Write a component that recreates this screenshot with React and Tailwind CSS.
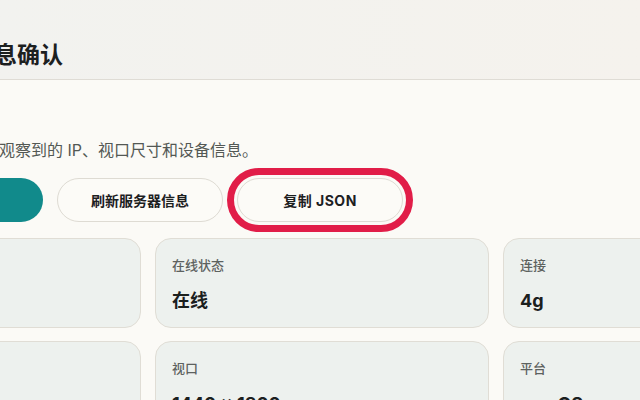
import React from "react";

const font = { fontFamily: '"Inter", "Noto Sans CJK SC", sans-serif' };

function Card({ label, value }) {
  return (
    <div className="h-[90px] rounded-2xl border border-[#e0ddd5] bg-[#edf1ee] px-4 pt-4">
      <div className="text-[13px] leading-5 font-medium text-[#5d625f]">{label}</div>
      <div className="mt-[14px] text-[18px] leading-6 font-bold text-[#1b201e]">{value}</div>
    </div>
  );
}

export default function App() {
  return (
    <div className="min-h-[400px] w-[640px] overflow-hidden bg-[#fbfaf6]" style={font}>
      <header className="border-b border-[#dfdcd5] bg-gradient-to-r from-[#f2f2ef] to-[#f5f2ed]">
        <div className="ml-[-193px] w-[1030px] pt-[40px] pb-[9px] pl-[3px]">
          <h1 className="text-[23px] leading-[30px] font-bold text-[#1c201f]">浏览器与服务器信息确认</h1>
        </div>
      </header>
      <main className="ml-[-193px] w-[1030px] pt-[58px]">
        <p className="text-[16px] leading-6 text-[#535854]">汇总当前浏览器与服务器所观察到的 IP、视口尺寸和设备信息。</p>
        <div className="mt-4 flex gap-[14px]">
          <button className="h-[44px] w-[236px] rounded-full bg-[#118a8b] text-[14px] font-bold text-white">重新检测</button>
          <button className="h-[44px] w-[166px] rounded-full border border-[#dedbd3] bg-[#fcfbf7] text-[14px] font-bold text-[#1c201f]">刷新服务器信息</button>
          <button className="h-[44px] w-[166px] rounded-full border border-[#dedbd3] bg-[#fcfbf7] text-[14px] font-bold tracking-[0.5px] text-[#1c201f] outline-[7px] outline-offset-[3px] outline-solid outline-[#e11d48]">复制 JSON</button>
        </div>
        <div className="mt-4 grid grid-cols-3 gap-x-[14px] gap-y-[13px]">
          <Card label="IP 地址" value="203.0.113.42" />
          <Card label="在线状态" value="在线" />
          <Card label="连接" value="4g" />
          <Card label="浏览器" value="Chrome 126" />
          <Card label="视口" value="1440 x 1800" />
          <Card label="平台" value="macOS" />
        </div>
      </main>
    </div>
  );
}
